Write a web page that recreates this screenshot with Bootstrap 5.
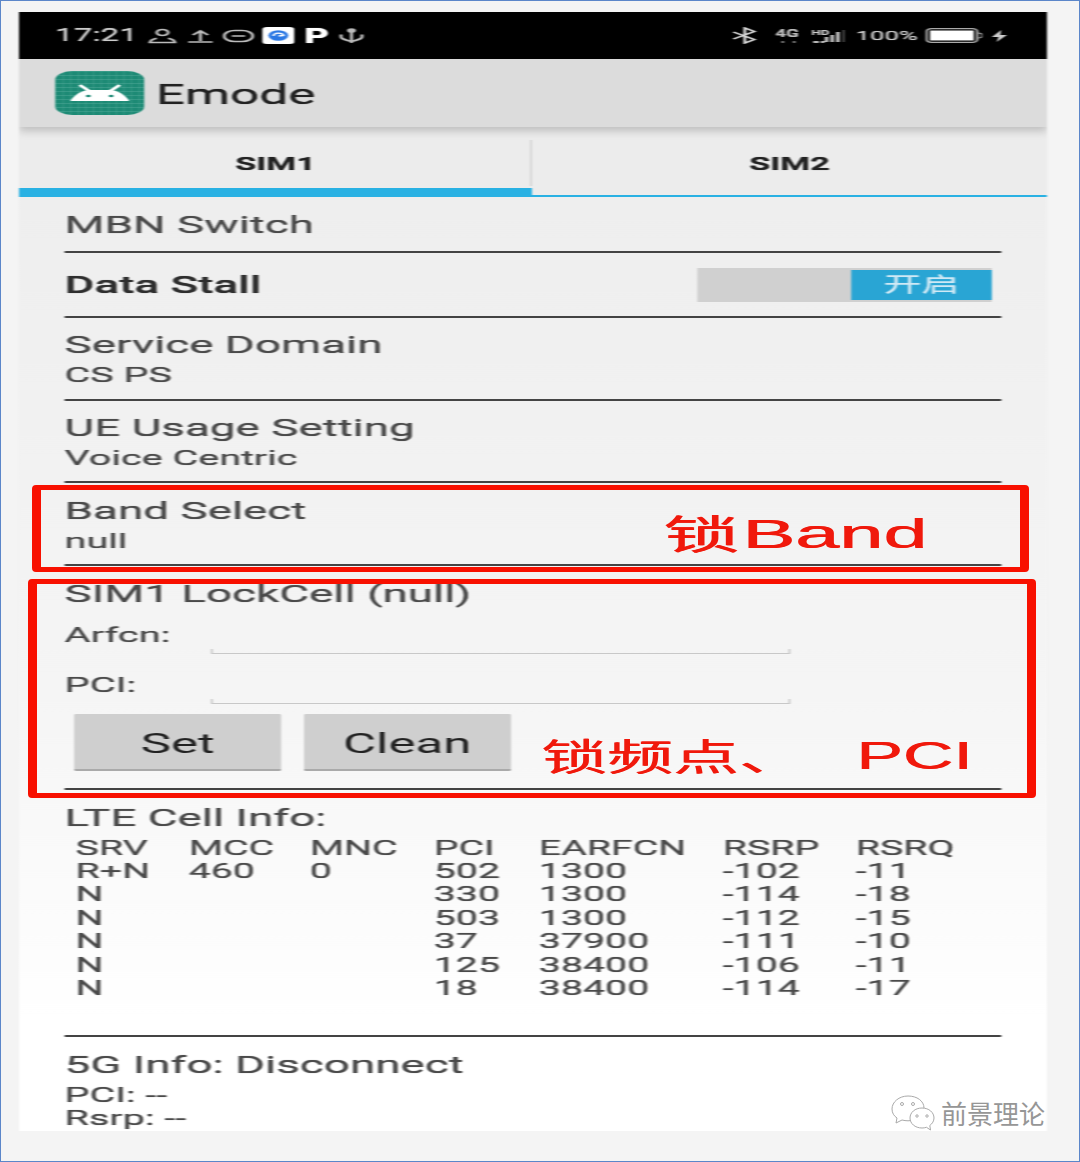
<!DOCTYPE html>
<html lang="zh">
<head>
  <meta charset="UTF-8">
  <meta name="viewport" content="width=device-width, initial-scale=1">
  <title>Emode</title>
  <link href="https://cdn.jsdelivr.net/npm/bootstrap@5.3.0/dist/css/bootstrap.min.css" rel="stylesheet">
  <style>
    html, body { margin: 0; background: #f4f4f4; }
    .shot-page {
      position: relative;
      width: 1080px;
      height: 1162px;
      overflow: hidden;
      border: 1px solid #5b86c9;
      padding: 11px 0 0 18px;
      font-family: Roboto, "Noto Sans CJK SC", sans-serif;
    }
    /* the phone screenshot is stretched sideways in the picture, so the whole screen is scaled */
    .phone {
      width: 541px;
      height: 1119px;
      overflow: hidden;
      transform: scaleX(1.9);
      transform-origin: left top;
      filter: blur(.6px);
      background: linear-gradient(#eeeeee 15%, #f5f5f5 60%, #ffffff 90%);
      color: #4a4a4a;
      text-shadow: 0 0 .5px currentColor;
    }
    .status-bar { height: 47px; background: #000; color: #ccc; padding: 0 21.5px 0 19px; font-size: 17.500px; }
    .status-bar svg { display: block; flex: none; }
    .status-left { gap: 5.500px; }
    .st-app { margin-left: -2px; }
    .st-p { font-size: 20px; line-height: 1; font-weight: 900; color: #fff; }
    .st-usb { margin-left: -.5px; }
    .st-pct { font-size: 13.500px; }
    .st-m5 { margin-left: 5px; }
    .st-m4 { margin-left: 3.500px; }
    .st-m9 { margin-left: 9.500px; }
    .app-bar { height: 68px; background: #dcdcdc; padding-left: 18.500px; gap: 6.500px; font-size: 27px; color: #222; box-shadow: 0 4px 6px rgba(0,0,0,.2); position: relative; z-index: 1; }
    .app-bar span { position: relative; top: 2px; }
    .tab-item { position: relative; height: 70px; font-size: 18px; font-weight: 700; color: #222; background: #ececec; border-bottom: 2px solid #29b1e3; padding-top: 4px; width: 271px; }
    .tab-on { border-bottom-width: 9px; padding-top: 12px; width: 270px; }
    .tab-on::after { content: ""; position: absolute; right: 0; top: 13px; width: 1px; height: 46px; background: #d4d4d4; }
    .item-row { margin: 0 24px; border-bottom: 2px solid #444; font-size: 24.100px; line-height: 30px; padding-top: 12px; }
    .item-row small { display: block; font-size: 20.800px; }
    .h-mbn { height: 56px; padding-top: 12.500px; }
    .h-stall { height: 65px; padding-top: 17px; color: #2e2e2e; font-weight: 500; }
    .h-two { height: 82.500px; }
    .h-band { padding-top: 13px; }
    .h-lock { height: 224px; padding-top: 13px; }
    .h-lte { height: 247px; padding-top: 13px; }
    .h-5g { height: 94px; border-bottom: 0; padding-top: 13px; }
    .stall-switch { width: 155px; height: 34px; margin: -2px 5px 0 0; background: #d0d0d0; }
    .stall-on { width: 74px; height: 30px; margin: 2px 0; background: #29a5d4; color: #cfe9f5; font-size: 20px; line-height: 30px; font-weight: 400; }
    .lock-line { height: 44px; font-size: 21px; }
    .lock-line label { width: 76.800px; flex: none; }
    .lock-input {
      width: 305px; height: 44px; padding: 0; border: 0; border-bottom: 1.500px solid #c8c8c8; border-radius: 0;
      background:
        linear-gradient(#c8c8c8, #c8c8c8) left bottom / 1px 4px no-repeat,
        linear-gradient(#c8c8c8, #c8c8c8) right bottom / 1px 4px no-repeat;
      position: relative; top: -3px;
    }
    .lock-btns { gap: 11.800px; margin: 7px 0 0 5px; }
    .btn.lock-btn { width: 109px; height: 57px; padding: 7px 0 0; border: 0; border-bottom: 2px solid #aaa; border-radius: 1px; background: #cfcfcf; color: #222; font-size: 26.800px; line-height: 1; }
    .cell-tbl { margin: 4px 0 0 5.800px; font-size: 20.700px; line-height: 23.400px; table-layout: fixed; width: 500px; }
    .cell-tbl td { padding: 0; white-space: nowrap; }
    .red-box { position: absolute; border-style: solid; border-color: #f81000; border-width: 5px 9px; border-radius: 4px; }
    .red-note { position: absolute; color: #f0190c; white-space: nowrap; line-height: 1; transform-origin: left top; text-shadow: .6px 0 0 #f0190c; }
    .note-cjk { font-family: "Noto Sans CJK SC", sans-serif; }
    .note-latin { font-family: "Liberation Sans", sans-serif; }
    .watermark { position: absolute; left: 890px; top: 1094px; gap: 6px; color: #969696; font-family: "Noto Sans CJK SC", sans-serif; font-size: 26px; line-height: 36px; text-shadow: 1px 1px 0 #fff; }
  </style>
</head>
<body>
  <div class="shot-page">
    <div class="phone">
      <!-- status bar -->
      <div class="status-bar d-flex align-items-center justify-content-between">
        <div class="status-left d-flex align-items-center">
          <span>17:21</span>
          <svg width="15" height="16" viewBox="0 0 15 16" fill="none" stroke="#bbb" stroke-width="1.600"><circle cx="7.500" cy="4.500" r="3"/><path d="M1 14.500c0-1.500.5-3 3.500-4.200M14 14.500c0-1.500-.5-3-3.500-4.200M0 14.500h15"/></svg>
          <svg width="13" height="16" viewBox="0 0 13 16" fill="none" stroke="#bbb" stroke-width="1.700"><path d="M6.500 13V3M2.500 7l4-4 4 4M0 14h13"/></svg>
          <svg width="17" height="16" viewBox="0 0 17 16" fill="none" stroke="#bbb" stroke-width="1.600"><rect x="1" y="2.500" width="15" height="11" rx="5.500"/><path d="M5 8h7"/></svg>
          <svg class="st-app" width="17" height="17" viewBox="0 0 17 17"><rect width="17" height="17" rx="2.500" fill="#fff"/><circle cx="8.500" cy="8.500" r="5.200" fill="#2b78e4"/><path d="M6 9a2.600 2.600 0 0 1 5.200-.5l-2.500.5" fill="none" stroke="#fff" stroke-width="1.300"/></svg>
          <span class="st-p">P</span>
          <svg class="st-usb" width="14" height="16" viewBox="0 0 14 16" fill="none" stroke="#bbb" stroke-width="1.700"><path d="M7 2v13M1.500 6.500v2.500c0 2 2 2.500 5.500 4.500 3.500-2 5.500-2.500 5.500-4.500V6.500"/><circle cx="7" cy="2.500" r="1.500" fill="#bbb"/></svg>
        </div>
        <div class="d-flex align-items-center">
          <svg width="14" height="17" viewBox="0 0 14 17" fill="none" stroke="#ddd" stroke-width="1.500"><path d="M1 5l11 7.500L7 16V1l5 3.500L1 12"/></svg>
          <svg class="st-m9" width="14" height="16" viewBox="0 0 14 16"><text x="0" y="9" font-size="10" font-weight="700" fill="#bbb" font-family="Roboto">4G</text><path d="M4 13v2M10 13v2" stroke="#777" stroke-width="1.500"/></svg>
          <svg class="st-m5" width="18" height="16" viewBox="0 0 18 16"><text x="0" y="6.500" font-size="7" font-weight="700" fill="#ccc" font-family="Roboto">HD</text><path d="M1 14h3M5 14h2M8 14V9M11 14V7M14 14V4" stroke="#bbb" stroke-width="2"/><path d="M17 14V2" stroke="#555" stroke-width="1"/></svg>
          <span class="st-m5 st-pct">100%</span>
          <svg class="st-m4" width="30" height="15" viewBox="0 0 30 15"><rect x=".7" y=".7" width="26.600" height="13.600" rx="2.500" fill="none" stroke="#aaa" stroke-width="1.300"/><rect x="2.500" y="2.500" width="23" height="10" fill="#fff"/><path d="M28 5c1.500 0 2 1 2 2.500S29.500 10 28 10" fill="none" stroke="#aaa"/></svg>
          <svg class="st-m5" width="8" height="14" viewBox="0 0 8 14"><path d="M5 1L0 8h3.500L2.500 13 8 6H4.500z" fill="#ccc"/></svg>
        </div>
      </div>

      <!-- toolbar -->
      <div class="app-bar d-flex align-items-center">
        <svg width="47" height="44" viewBox="0 0 47 44">
          <defs>
            <pattern id="icon-grid" width="4" height="4" patternUnits="userSpaceOnUse"><path d="M4 0H0V4" fill="none" stroke="#5fb3a3" stroke-width=".5"/></pattern>
          </defs>
          <rect width="47" height="44" rx="9" fill="#1d8a75"/>
          <rect width="47" height="44" rx="9" fill="url(#icon-grid)"/>
          <path d="M13 14l5 6M34 14l-5 6" stroke="#fff" stroke-width="2"/>
          <path d="M8 30C10 24 14 19 18 19H29C33 19 37 24 39 30z" fill="#fff"/>
          <circle cx="17.500" cy="25" r="1.300" fill="#1d8a75"/><circle cx="29.500" cy="25" r="1.300" fill="#1d8a75"/>
        </svg>
        <span>Emode</span>
      </div>

      <!-- tabs -->
      <div class="d-flex">
        <div class="tab-item tab-on d-flex align-items-center justify-content-center">SIM1</div>
        <div class="tab-item d-flex align-items-center justify-content-center">SIM2</div>
      </div>

      <div class="item-row h-mbn">MBN Switch</div>
      <div class="item-row h-stall d-flex justify-content-between">
        <span>Data Stall</span>
        <div class="stall-switch d-flex justify-content-end"><div class="stall-on text-center">开启</div></div>
      </div>
      <div class="item-row h-two">Service Domain<small>CS PS</small></div>
      <div class="item-row h-two">UE Usage Setting<small>Voice Centric</small></div>
      <div class="item-row h-two h-band">Band Select<small>null</small></div>

      <div class="item-row h-lock">
        <div>SIM1 LockCell (null)</div>
        <div class="lock-line d-flex align-items-center mt-1"><label>Arfcn:</label><input class="form-control lock-input" type="text"></div>
        <div class="lock-line d-flex align-items-center" style="margin-top:6px"><label>PCI:</label><input class="form-control lock-input" type="text"></div>
        <div class="lock-btns d-flex">
          <button class="btn lock-btn" type="button">Set</button>
          <button class="btn lock-btn" type="button">Clean</button>
        </div>
      </div>

      <div class="item-row h-lte">
        <div>LTE Cell Info:</div>
        <table class="cell-tbl">
          <colgroup><col style="width:59.500px"><col style="width:63.700px"><col style="width:65.300px"><col style="width:55.300px"><col style="width:96.800px"><col style="width:70px"><col></colgroup>
          <tbody id="cell-rows"></tbody>
        </table>
      </div>

      <div class="item-row h-5g">
        <div>5G Info: Disconnect</div>
        <small style="line-height:23.500px;margin-top:4px">PCI: --</small>
        <small style="line-height:23.500px">Rsrp: --</small>
      </div>
    </div>

    <!-- red notes drawn over the screenshot -->
    <div class="red-box" style="left:31px;top:484px;width:997px;height:87px"></div>
    <div class="red-box" style="left:27px;top:578px;width:1008px;height:219px"></div>
    <div class="red-note note-cjk" style="left:662px;top:511px;font-size:40px;transform:scaleX(1.9)">锁</div>
    <div class="red-note note-latin" style="left:741px;top:513px;font-size:40px;transform:scaleX(1.98)">Band</div>
    <div class="red-note note-cjk" style="left:540px;top:736px;font-size:37px;transform:scaleX(1.78)">锁频点、</div>
    <div class="red-note note-latin" style="left:855px;top:735px;font-size:39px;transform:scaleX(1.79)">PCI</div>

    <div class="watermark d-flex align-items-center">
      <svg width="44" height="36" viewBox="0 0 44 36" fill="#fff" stroke="#aaa" stroke-width="1">
        <path d="M17 1C8 1 1 7 1 14c0 4 2 7 5 9l-1 5 6-3c2 .5 4 .8 6 .8 9 0 16-5.800 16-12.800S26 1 17 1z"/>
        <path d="M31 13c-7 0-12 4.500-12 10s5 10 12 10c1.500 0 3-.2 4.500-.7l4 2.700-.7-4.500c2.500-1.800 4.200-4.500 4.200-7.500 0-5.500-5-10-12-10z"/>
        <circle cx="11" cy="9" r="1.500"/><circle cx="22" cy="9" r="1.500"/><circle cx="26" cy="21" r="1.200"/><circle cx="36" cy="21" r="1.200"/>
      </svg>
      <span>前景理论</span>
    </div>
  </div>

  <script src="https://cdn.jsdelivr.net/npm/bootstrap@5.3.0/dist/js/bootstrap.bundle.min.js"></script>
  <script>
    // LTE neighbour table
    const cellRows = [
      ["SRV", "MCC", "MNC", "PCI", "EARFCN", "RSRP", "RSRQ"],
      ["R+N", "460", "0", "502", "1300", "-102", "-11"],
      ["N", "", "", "330", "1300", "-114", "-18"],
      ["N", "", "", "503", "1300", "-112", "-15"],
      ["N", "", "", "37", "37900", "-111", "-10"],
      ["N", "", "", "125", "38400", "-106", "-11"],
      ["N", "", "", "18", "38400", "-114", "-17"]
    ];
    document.getElementById("cell-rows").innerHTML = cellRows
      .map(row => "<tr>" + row.map(v => `<td>${v}</td>`).join("") + "</tr>")
      .join("");
  </script>
</body>
</html>
